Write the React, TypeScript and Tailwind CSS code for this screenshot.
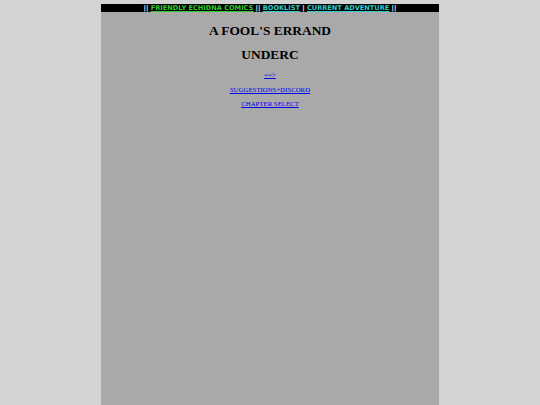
import React from "react";

export default function App() {
  return (
    <div className="min-h-[405px] bg-[#d3d3d3] pt-[4px]">
      <div className="mx-auto w-[338px] min-h-[401px] bg-[#a9a9a9] flex flex-col items-center">
        <div
          className="w-full h-[8px] bg-black flex items-center justify-center text-[6.6px] leading-[8px] font-bold text-white whitespace-pre"
          style={{ fontFamily: '"DejaVu Sans", Verdana, sans-serif' }}
        >
          <span>|| </span>
          <a href="#" className="text-[#33cc33] underline">FRIENDLY ECHIDNA COMICS</a>
          <span> || </span>
          <a href="#" className="text-[#33cccc] underline">BOOKLIST</a>
          <span> | </span>
          <a href="#" className="text-[#33cccc] underline">CURRENT ADVENTURE</a>
          <span> ||</span>
        </div>
        <div
          className="flex flex-col items-center text-black"
          style={{ fontFamily: '"Liberation Serif", "Times New Roman", serif' }}
        >
          <div className="mt-[11px] h-[16px] leading-[16px] text-[13.4px] font-bold">A FOOL'S ERRAND</div>
          <div className="mt-[8px] h-[16px] leading-[16px] text-[13.4px] font-bold">UNDERC</div>
          <a href="#" className="mt-[8px] h-[8px] leading-[8px] text-[6.8px] text-[#0000ee] underline">==&gt;</a>
          <a href="#" className="mt-[7px] h-[8px] leading-[8px] text-[6.8px] text-[#0000ee] underline">SUGGESTIONS+DISCORD</a>
          <a href="#" className="mt-[6px] h-[8px] leading-[8px] text-[6.8px] text-[#0000ee] underline">CHAPTER SELECT</a>
        </div>
      </div>
    </div>
  );
}
